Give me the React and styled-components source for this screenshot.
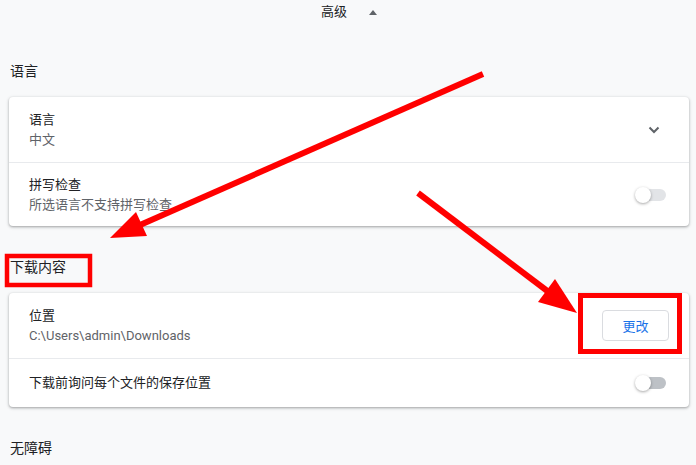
import styled, { createGlobalStyle } from "styled-components";

const GlobalStyle = createGlobalStyle`
  html, body {
    margin: 0;
    padding: 0;
    background: #f8f9fa;
  }
  body {
    font-family: Roboto, "Noto Sans CJK SC", sans-serif;
    color: #202124;
  }
`;

const Page = styled.div`
  position: relative;
  width: 696px;
  height: 465px;
  overflow: hidden;
  box-sizing: border-box;
  padding: 0 7px 0 9px;
  background: #f8f9fa;
`;

const Header = styled.div`
  height: 30px;
  display: flex;
  justify-content: center;
  align-items: flex-start;
  gap: 22px;
  padding-top: 2px;
  box-sizing: border-box;
  font-size: 13px;
  line-height: 20px;
  color: #202124;
`;

const UpCaret = styled.span`
  width: 0;
  height: 0;
  margin-top: 8px;
  border-left: 4px solid transparent;
  border-right: 4px solid transparent;
  border-bottom: 5px solid #5f6368;
`;

const SectionTitle = styled.div`
  padding: 31px 0 15px 1px;
  font-size: 14px;
  line-height: 21px;
  color: #202124;
`;

const Card = styled.div`
  background: #fff;
  border-radius: 4px;
  box-shadow: 0 1px 2px rgba(60, 64, 67, 0.3), 0 1px 3px 1px rgba(60, 64, 67, 0.15);
`;

const Row = styled.div`
  display: flex;
  align-items: center;
  height: ${(p) => p.$h}px;
  padding: 0 ${(p) => p.$pr ?? 20}px 0 20px;
  border-top: ${(p) => (p.$first ? "none" : "1px solid #e8eaed")};
  box-sizing: border-box;
`;

const Text = styled.div`
  flex: 1;
  display: flex;
  flex-direction: column;
`;

const Label = styled.div`
  font-size: 13px;
  line-height: 20px;
  color: #202124;
`;

const Sub = styled.div`
  font-size: 13px;
  line-height: 20px;
  color: #5f6368;
`;

const Chevron = styled.svg`
  width: 12px;
  height: 8px;
  margin-right: 4px;
`;

const Toggle = styled.div`
  position: relative;
  width: 28px;
  height: 12px;
  border-radius: 6px;
  background: ${(p) => (p.$disabled ? "#e2e4e7" : "#bdc1c6")};
`;

const Knob = styled.span`
  position: absolute;
  left: -3px;
  top: -2px;
  width: 16px;
  height: 16px;
  border-radius: 50%;
  background: #fff;
  box-shadow: 0 1px 3px rgba(0, 0, 0, 0.35);
`;

const Button = styled.button`
  width: 67px;
  height: 31px;
  border: 1px solid #dadce0;
  border-radius: 4px;
  background: #fff;
  color: #1a73e8;
  font-family: Roboto, "Noto Sans CJK SC", sans-serif;
  font-size: 13px;
  padding: 0;
`;

const Overlay = styled.svg`
  position: absolute;
  left: 0;
  top: 0;
  pointer-events: none;
`;

function Switch({ disabled }) {
  return (
    <Toggle $disabled={disabled}>
      <Knob />
    </Toggle>
  );
}

export default function App() {
  return (
    <>
      <GlobalStyle />
      <Page>
        <Header>
          <span>高级</span>
          <UpCaret />
        </Header>

        <SectionTitle>语言</SectionTitle>
        <Card>
          <Row $h={65} $first $pr={25}>
            <Text>
              <Label>语言</Label>
              <Sub>中文</Sub>
            </Text>
            <Chevron viewBox="0 0 12 8">
              <path d="M1.5 1.5l4.5 4.5 4.5-4.5" fill="none" stroke="#5f6368" strokeWidth="2" />
            </Chevron>
          </Row>
          <Row $h={64} $pr={23}>
            <Text>
              <Label>拼写检查</Label>
              <Sub>所选语言不支持拼写检查</Sub>
            </Text>
            <Switch disabled />
          </Row>
        </Card>

        <SectionTitle>下载内容</SectionTitle>
        <Card>
          <Row $h={65} $first>
            <Text>
              <Label>位置</Label>
              <Sub>C:\Users\admin\Downloads</Sub>
            </Text>
            <Button>更改</Button>
          </Row>
          <Row $h={49} $pr={23}>
            <Text>
              <Label>下载前询问每个文件的保存位置</Label>
            </Text>
            <Switch />
          </Row>
        </Card>

        <SectionTitle>无障碍</SectionTitle>

        <Overlay width="696" height="465" viewBox="0 0 696 465">
          <g fill="#ff0000" stroke="#ff0000">
            <line x1="483" y1="74" x2="140" y2="225" strokeWidth="6" />
            <polygon points="110,238 136,212 147,236" stroke="none" />
            <line x1="418" y1="193" x2="550" y2="293" strokeWidth="6" />
            <polygon points="577,313 555,279 538,302" stroke="none" />
          </g>
          <g fill="none" stroke="#ff0000">
            <rect x="7" y="256" width="83" height="29" strokeWidth="4.5" />
            <rect x="580.5" y="295.5" width="99" height="56" strokeWidth="5" />
          </g>
        </Overlay>
      </Page>
    </>
  );
}
